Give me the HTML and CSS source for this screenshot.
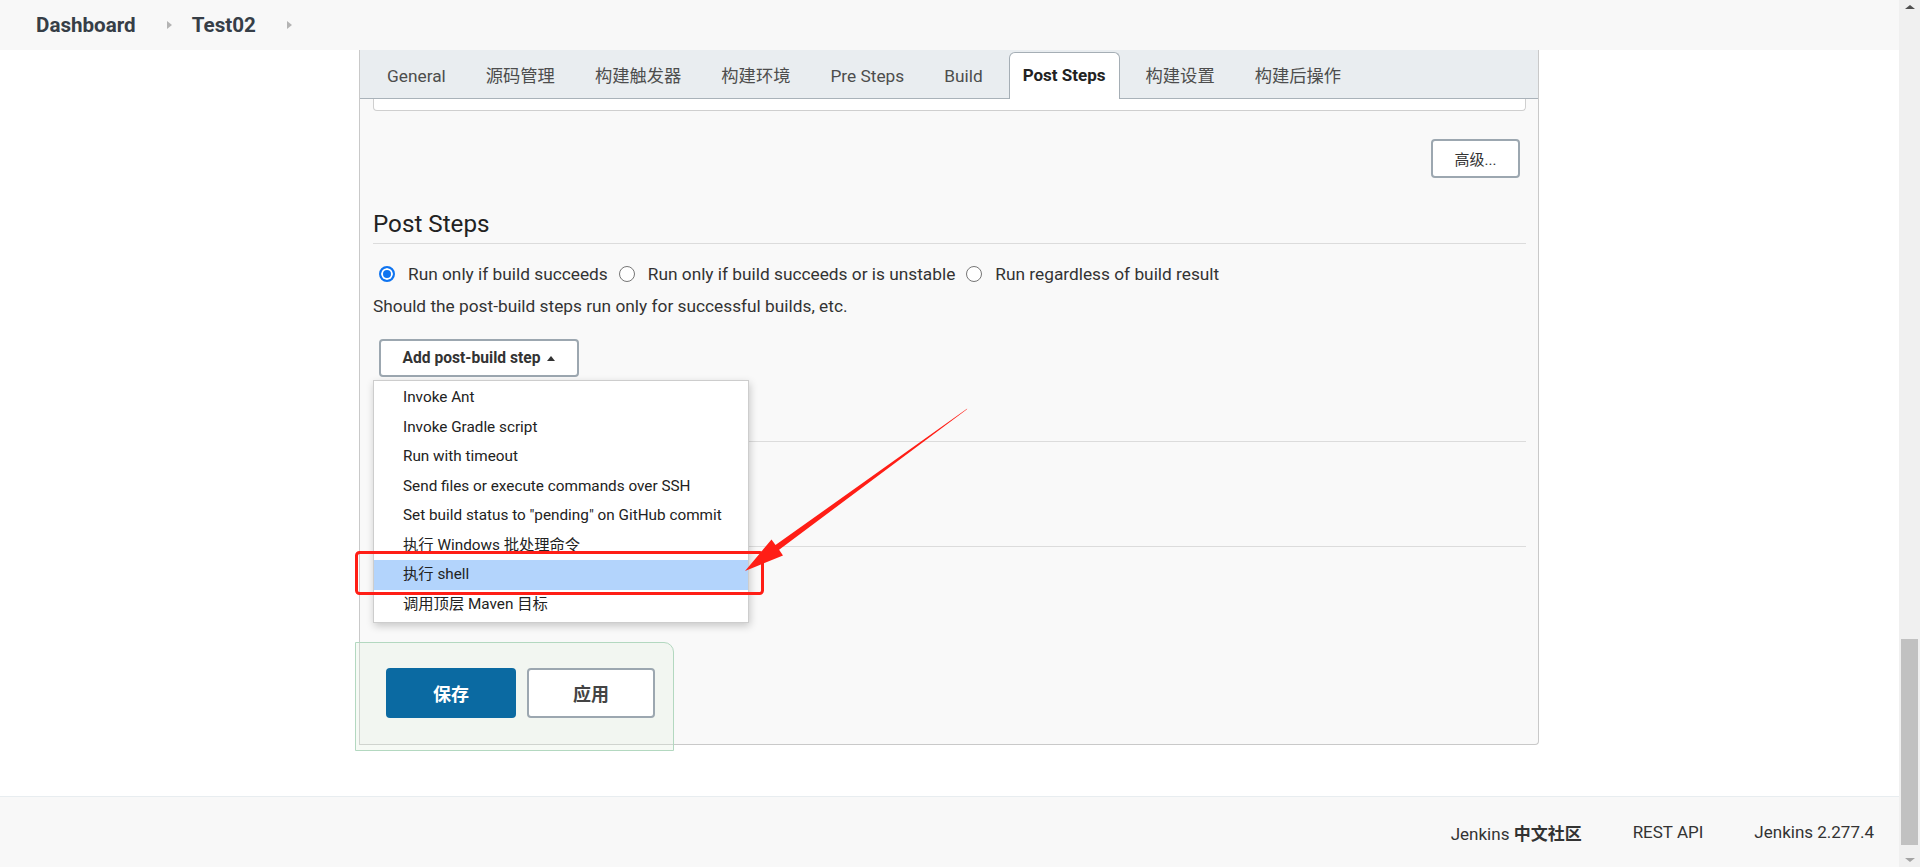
FILE: index.html
```html
<!DOCTYPE html>
<html lang="zh-CN">

<head>
  <meta charset="UTF-8" />
  <meta name="viewport" content="width=device-width, initial-scale=1.0" />
  <title>Test02 Config [Jenkins]</title>
  <link rel="stylesheet" href="styles.css">
</head>

<body>
  <div class="page">
    <header class="top-bar">
      <a class="crumb" href="#">Dashboard</a>
      <span class="crumb-arrow"></span>
      <a class="crumb" href="#">Test02</a>
      <span class="crumb-arrow"></span>
    </header>

    <main class="main">
      <div class="config">
        <nav class="tabbar">
          <span class="tab">General</span>
          <span class="tab">源码管理</span>
          <span class="tab">构建触发器</span>
          <span class="tab">构建环境</span>
          <span class="tab">Pre Steps</span>
          <span class="tab">Build</span>
          <span class="tab active">Post Steps</span>
          <span class="tab">构建设置</span>
          <span class="tab">构建后操作</span>
        </nav>

        <div class="config-body">
          <div class="field-tail"></div>

          <div class="advanced-row">
            <button class="btn">高级...</button>
          </div>

          <h2 class="section-title">Post Steps</h2>

          <div class="radio-row">
            <label class="radio-item"><span class="radio checked"></span>Run only if build succeeds</label>
            <label class="radio-item"><span class="radio"></span>Run only if build succeeds or is unstable</label>
            <label class="radio-item"><span class="radio"></span>Run regardless of build result</label>
          </div>
          <div class="help">Should the post-build steps run only for successful builds, etc.</div>

          <div class="add-step">
            <button class="btn btn-add">Add post-build step <span class="caret"></span></button>
            <ul class="menu">
              <li>Invoke Ant</li>
              <li>Invoke Gradle script</li>
              <li>Run with timeout</li>
              <li>Send files or execute commands over SSH</li>
              <li>Set build status to "pending" on GitHub commit</li>
              <li>执行 Windows 批处理命令</li>
              <li class="selected">执行 shell</li>
              <li>调用顶层 Maven 目标</li>
            </ul>
          </div>

          <div class="section-gap first"></div>
          <div class="section-gap second"></div>
        </div>

        <div class="save-bar">
          <button class="btn-save">保存</button>
          <button class="btn-apply">应用</button>
        </div>
      </div>
    </main>

    <footer class="footer">
      <a href="#">Jenkins <b>中文社区</b></a>
      <a href="#">REST API</a>
      <span>Jenkins 2.277.4</span>
    </footer>
  </div>

  <div class="scrollbar">
    <span class="sb-up"></span>
    <span class="sb-thumb"></span>
    <span class="sb-down"></span>
  </div>

  <!-- red annotation drawn over the screenshot -->
  <svg class="annotation" width="1920" height="867" viewBox="0 0 1920 867">
    <rect x="356.5" y="552.5" width="406" height="41" rx="3" fill="none" stroke="#ff1e16" stroke-width="3" />
    <polygon fill="#ff1e16"
      points="745,571 771.5,539.5 775.5,545 967.3,408.6 966.7,409.4 779.1,549.8 783,555.5" />
  </svg>
</body>

</html>
```

FILE: styles.css
```css
body {
  margin: 0;
  background: #fff;
  font-family: Roboto, "Noto Sans CJK SC", sans-serif;
  color: #333;
  overflow: hidden;
  height: 867px;
}

a {
  color: inherit;
  text-decoration: none;
}

button {
  font-family: inherit;
  cursor: pointer;
}

.page {
  margin-right: 21px;
  height: 867px;
  display: flex;
  flex-direction: column;
}

/* breadcrumb bar */
.top-bar {
  height: 50px;
  background: #f8f8f8;
  display: flex;
  align-items: center;
  padding-left: 36px;
  flex-shrink: 0;
}

.crumb {
  font-size: 20.6px;
  font-weight: 700;
  color: #363e47;
}

.crumb-arrow {
  width: 0;
  height: 0;
  border-top: 4px solid transparent;
  border-bottom: 4px solid transparent;
  border-left: 5px solid #b4b4b4;
  margin: 0 20px 0 31px;
}

.main {
  flex: 1;
}

/* job config panel */
.config {
  position: relative;
  margin-left: 359px;
  width: 1180px;
  height: 695px;
  box-sizing: border-box;
  border: 1px solid #c9c9c9;
  border-top: none;
  border-bottom-right-radius: 4px;
  background: #f9f9f9;
}

.tabbar {
  height: 49px;
  box-sizing: border-box;
  background: #e9edf0;
  border-bottom: 1px solid #a9b2b9;
  display: flex;
  align-items: flex-end;
  padding: 0 7px;
}

.tab {
  height: 45px;
  line-height: 44px;
  padding: 0 13px;
  margin: 0 6px -1px;
  border: 1px solid transparent;
  border-bottom: none;
  font-size: 17.3px;
  color: #4d4d4d;
  white-space: nowrap;
}

.tab.active {
  background: #fff;
  border-color: #a5aeb5;
  border-radius: 6px 6px 0 0;
  font-weight: 700;
  color: #222;
  height: 46px;
  font-size: 17px;
}

.config-body {
  padding: 0 12px 0 13px;
}

.field-tail {
  height: 11px;
  background: #fff;
  border: 1px solid #cfcfcf;
  border-top: none;
  border-radius: 0 0 4px 4px;
}

.advanced-row {
  display: flex;
  justify-content: flex-end;
  padding-right: 6px;
  margin-top: 28px;
}

.btn {
  background: #fff;
  border: 2px solid #9ca7b0;
  border-radius: 4px;
  color: #333;
  font-size: 15px;
}

.advanced-row .btn {
  width: 89px;
  height: 39px;
}

.section-title {
  margin: 30px 0 0;
  font-size: 24.2px;
  font-weight: 400;
  line-height: 32px;
  padding-bottom: 3px;
  border-bottom: 1px solid #dcdcdc;
  color: #222;
}

.radio-row {
  display: flex;
  margin-top: 15px;
  height: 30px;
  align-items: center;
  font-size: 17.3px;
}

.radio-item {
  display: flex;
  align-items: center;
  margin-right: 11px;
}

.radio {
  width: 16px;
  height: 16px;
  box-sizing: border-box;
  border: 1px solid #767676;
  border-radius: 50%;
  background: #fff;
  margin: 0 13px 0 0;
}

.radio-item:first-child .radio {
  margin-left: 6px;
}

.radio.checked {
  border: 2px solid #0f74f0;
  box-shadow: inset 0 0 0 2px #fff;
  background: #0f74f0;
}

.help {
  margin-top: 5px;
  line-height: 24px;
  font-size: 17.3px;
}

.add-step {
  position: relative;
  margin-top: 21px;
  padding-left: 6px;
}

.btn-add {
  width: 200px;
  height: 38px;
  font-weight: 700;
  font-size: 15.6px;
  display: flex;
  align-items: center;
  justify-content: center;
  gap: 7px;
}

.caret {
  width: 0;
  height: 0;
  border-left: 4px solid transparent;
  border-right: 4px solid transparent;
  border-bottom: 5px solid #333;
}

.menu {
  position: absolute;
  top: 41px;
  left: 0;
  z-index: 2;
  width: 376px;
  margin: 0;
  padding: 2px 0 3px;
  list-style: none;
  background: #fff;
  border: 1px solid #cdcdcd;
  box-sizing: border-box;
  box-shadow: 1px 3px 8px rgba(0, 0, 0, 0.2);
  font-size: 15.3px;
}

.menu li {
  height: 29.5px;
  line-height: 29.5px;
  padding: 0 0 0 29px;
  color: #222;
  white-space: nowrap;
}

.menu li.selected {
  background: #b3d4fc;
}

.section-gap.first {
  height: 64px;
  border-bottom: 1px solid #dcdcdc;
}

.section-gap.second {
  height: 104px;
  border-bottom: 1px solid #dcdcdc;
}

/* sticky save bar */
.save-bar {
  position: absolute;
  left: -5px;
  top: 592px;
  width: 319px;
  height: 109px;
  box-sizing: border-box;
  background: rgba(226, 240, 222, 0.3);
  border: 1px solid #b3d8c0;
  border-top-right-radius: 10px;
  display: flex;
  gap: 11px;
  padding: 25px 0 0 30px;
}

.btn-save,
.btn-apply {
  height: 50px;
  border-radius: 4px;
  font-size: 18px;
  font-weight: 700;
}

.btn-save {
  width: 130px;
  background: #0b6aa2;
  border: none;
  color: #fff;
}

.btn-apply {
  width: 128px;
  background: #fff;
  border: 2px solid #9ca7b0;
  color: #444;
}

.footer {
  height: 71px;
  box-sizing: border-box;
  border-top: 1px solid #e8edf0;
  background: #f8f8f8;
  display: flex;
  align-items: center;
  justify-content: flex-end;
  padding-right: 25px;
  font-size: 17px;
  color: #333;
  flex-shrink: 0;
}

.footer > * {
  margin-left: 51px;
}

/* fake window scrollbar */
.scrollbar {
  position: fixed;
  top: 0;
  right: 0;
  width: 21px;
  height: 867px;
  background: #f0f0f0;
}

.sb-up,
.sb-down {
  position: absolute;
  left: 6px;
  width: 0;
  height: 0;
  border-left: 5px solid transparent;
  border-right: 5px solid transparent;
}

.sb-up {
  top: 5px;
  border-bottom: 4px solid #505050;
}

.sb-down {
  bottom: 5px;
  border-top: 4px solid #a3a3a3;
}

.sb-thumb {
  position: absolute;
  left: 2px;
  right: 2px;
  top: 639px;
  height: 206px;
  background: #c1c1c1;
}

.annotation {
  position: absolute;
  top: 0;
  left: 0;
  pointer-events: none;
  z-index: 5;
}
```
